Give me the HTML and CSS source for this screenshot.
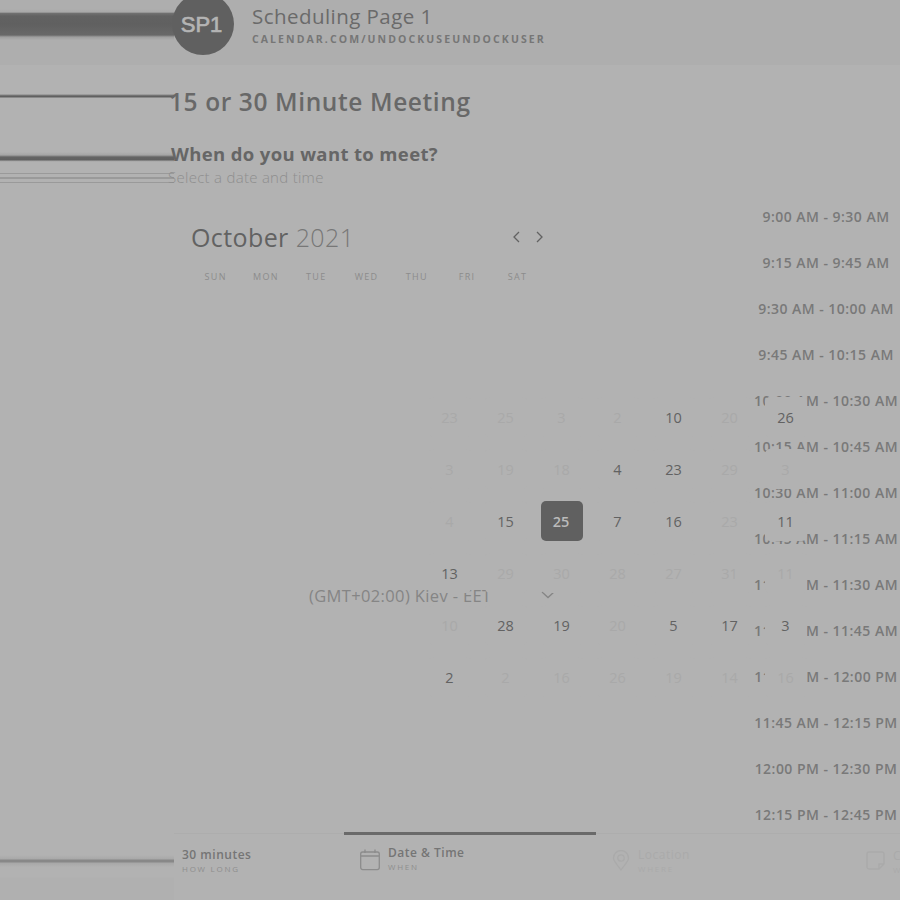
FILE: index.html
```
<!DOCTYPE html>
<html lang="en">
<head>
<meta charset="utf-8">
<title>Scheduling Page 1</title>
<link rel="stylesheet" href="styles.css">
</head>
<body>
<div class="app">
  <aside class="edge"></aside>
  <div class="page">
    <header class="header">
      <div class="avatar">SP1</div>
      <div class="owner">
        <div class="owner-name">Scheduling Page 1</div>
        <div class="owner-url">CALENDAR.COM/UNDOCKUSEUNDOCKUSER</div>
      </div>
    </header>
    <main class="main">
      <section class="picker">
        <h1>15 or 30 Minute Meeting</h1>
        <h2>When do you want to meet?</h2>
        <p class="hint">Select a date and time</p>
        <div class="month">
          <div class="month-name">October <span>2021</span></div>
          <svg class="arrows" width="32" height="14" viewBox="0 0 32 14"><path d="M7 2 2 7l5 5M25 2l5 5-5 5"/></svg>
        </div>
        <div class="weekdays"><span>SUN</span><span>MON</span><span>TUE</span><span>WED</span><span>THU</span><span>FRI</span><span>SAT</span></div>
        <div class="zone"><span>(GMT+02:00) Kiev - EET</span><svg width="14" height="8" viewBox="0 0 14 8"><path d="m1 1 6 5.5L13 1"/></svg></div>
      </section>
      <section class="times">
        <div>9:00 AM - 9:30 AM</div><div>9:15 AM - 9:45 AM</div><div>9:30 AM - 10:00 AM</div><div>9:45 AM - 10:15 AM</div>
        <div>10:00 AM - 10:30 AM</div><div>10:15 AM - 10:45 AM</div><div>10:30 AM - 11:00 AM</div><div>10:45 AM - 11:15 AM</div>
        <div>11:00 AM - 11:30 AM</div><div>11:15 AM - 11:45 AM</div><div>11:30 AM - 12:00 PM</div><div>11:45 AM - 12:15 PM</div>
        <div>12:00 PM - 12:30 PM</div><div>12:15 PM - 12:45 PM</div>
      </section>
      <div class="days">
        <i>23</i><i>25</i><i>3</i><i>2</i><b>10</b><i>20</i><b>26</b>
        <i>3</i><i>19</i><i>18</i><b>4</b><b>23</b><i>29</i><i>3</i>
        <i>4</i><b>15</b><b class="selected">25</b><b>7</b><b>16</b><i>23</i><b>11</b>
        <b>13</b><i>29</i><i>30</i><i>28</i><i>27</i><i>31</i><i>11</i>
        <i>10</i><b>28</b><b>19</b><i>20</i><b>5</b><b>17</b><b>3</b>
        <b>2</b><i>2</i><i>16</i><i>26</i><i>19</i><i>14</i><i>16</i>
      </div>
    </main>
    <footer class="steps">
      <div class="step first"><div class="label"><strong>30 minutes</strong><small>HOW LONG</small></div></div>
      <div class="step active">
        <svg width="20" height="22" viewBox="0 0 20 22"><rect x=".7" y="3" width="18.6" height="17.6" rx="2"/><path d="M1 7h18M5 .5V4M15 .5V4"/></svg>
        <div class="label"><strong>Date &amp; Time</strong><small>WHEN</small></div>
      </div>
      <div class="step faint">
        <svg width="18" height="21" viewBox="0 0 18 21"><path d="M9 20C5 14 1.500 11.500 1.500 8a7.500 7.500 0 0 1 15 0C16.500 11.500 13 14 9 20z"/><circle cx="9" cy="8" r="3.200"/></svg>
        <div class="label"><strong>Location</strong><small>WHERE</small></div>
      </div>
      <div class="step faint last">
        <svg width="19" height="19" viewBox="0 0 19 19"><path d="M13 18H3a2 2 0 0 1-2-2V3a2 2 0 0 1 2-2h13a2 2 0 0 1 2 2v10zV13h5"/></svg>
        <div class="label"><strong>Contact</strong><small>WHO</small></div>
      </div>
    </footer>
  </div>
</div>
</body>
</html>
```
FILE: styles.css
```
* { box-sizing: border-box; }
body { margin: 0; background: #b2b2b2; font-family: "Open Sans", sans-serif; color: #626262; }
.app { display: flex; width: 900px; height: 900px; overflow: hidden; }
.edge {
  flex: 0 0 174px;
  background: linear-gradient(to bottom,
    #aeaeae 0 9px, #a9a9a9 12px, #707070 13.500px, #626262 16px, #606060 24px, #686868 35px, #9e9e9e 37px, #aeaeae 40px 65px,
    #b2b2b2 65px 94px, #858585 95px, #606060 96px 97px, #b2b2b2 98px 152px,
    #a5a5a5 155px, #656565 157px, #606060 160px, #a5a5a5 161px, #b2b2b2 162px 173px,
    #9a9a9a 173px 174px, #b2b2b2 174px 177px, #9a9a9a 177px 179px, #b2b2b2 179px 182px, #9a9a9a 182px 183px, #b2b2b2 183px 855px,
    #a8a8a8 859px, #888888 860px, #888888 862px, #a8a8a8 863px, #b2b2b2 867px 877px, #b0b0b0 878px);
}
.page { flex: 1; min-width: 0; display: flex; flex-direction: column; }
.header { height: 65px; background: #aeaeae; display: flex; align-items: flex-start; gap: 18px; }
.avatar { width: 62px; height: 62px; margin: -7px 0 0 -2px; border-radius: 50%; background: #606060; color: #b4b4b4; display: flex; align-items: center; justify-content: center; font: 22px/62px "Liberation Sans", sans-serif; -webkit-text-stroke: .7px #b4b4b4; padding: 2px 3px 0 0; }
.owner { white-space: nowrap; }
.owner-name { margin-top: 1px; font-size: 20.500px; line-height: 30px; letter-spacing: .45px; color: #6a6a6a; }
.owner-url { margin-top: 1px; font-size: 10.500px; line-height: 14px; font-weight: 700; letter-spacing: 2.080px; color: #767676; }
.main { position: relative; flex: 1; min-height: 0; display: flex; justify-content: space-between; }
.picker { width: 400px; white-space: nowrap; }
h1 { margin: 19px 0 0 -5px; font-size: 24.500px; line-height: 36px; font-weight: 600; letter-spacing: .6px; color: #686868; }
h2 { margin: 21px 0 0 -3px; font-size: 18.500px; line-height: 25px; font-weight: 700; letter-spacing: .36px; color: #666; }
.hint { margin: 1px 0 0 -6px; font-size: 15px; line-height: 20px; color: #8e8e8e; font-weight: 300; letter-spacing: .28px; }
.month { display: flex; justify-content: space-between; align-items: center; height: 40px; margin-top: 30px; padding: 0 30px 0 17px; }
.month-name { font-size: 25px; letter-spacing: .4px; }
.month-name span { font-weight: 300; color: #777; }
svg { fill: none; stroke: currentColor; stroke-width: 1.300; flex: none; }
.weekdays { display: grid; grid-template-columns: repeat(7, 50.300px); margin: 11px 0 0 16.500px; font-size: 9px; line-height: 18px; letter-spacing: 1.300px; color: #8c8c8c; text-align: center; }
.zone { display: flex; align-items: center; justify-content: space-between; width: 246px; height: 24px; margin: 297px 0 0 135px; font-size: 16.500px; letter-spacing: .36px; color: #858585; }
.times { width: 144px; margin: 129px 2px 0 0; font-size: 14px; font-weight: 600; line-height: 45px; letter-spacing: .47px; color: #797979; display: flex; flex-direction: column; align-items: center; white-space: nowrap; }
.times div { height: 46px; flex: none; }
.days { position: absolute; left: 254.500px; top: 332px; display: grid; grid-template-columns: repeat(7, 42px); grid-auto-rows: 40px; gap: 12px 14px; font-size: 14.500px; line-height: 42px; text-align: center; }
.days i, .days b { font-style: normal; font-weight: 400; background: #b2b2b2; border-radius: 5px; }
.days i { color: #a9a9a9; }
.days .selected { background: #606060; color: #bababa; font-weight: 600; padding-right: 1px; }
.steps { display: flex; height: 67px; border-top: 1px solid #adadad; }
.step { position: relative; flex: 0 0 252px; display: flex; align-items: flex-start; gap: 8px; padding: 16px 0 0 16px; color: #8c8c8c; }
.step.first { flex-basis: 170px; padding: 15px 0 0 8px; }
.step.active { border-top: 3px solid #6a6a6a; margin-top: -2px; padding-top: 14px; }
.step.last { padding: 17px 0 0 18px; }
.label { display: flex; flex-direction: column; margin-top: -3px; white-space: nowrap; }
.active .label { margin-top: -4px; }
.first .label { margin-top: -2px; }
.label strong { font-size: 12px; line-height: 16px; font-weight: 600; letter-spacing: .5px; color: #757575; }
.label small { font-size: 8px; line-height: 12px; letter-spacing: 1.750px; color: #8e8e8e; }
.faint, .faint .label strong, .faint .label small { color: #aaaaaa; }
.faint .label strong { font-weight: 400; }
```
